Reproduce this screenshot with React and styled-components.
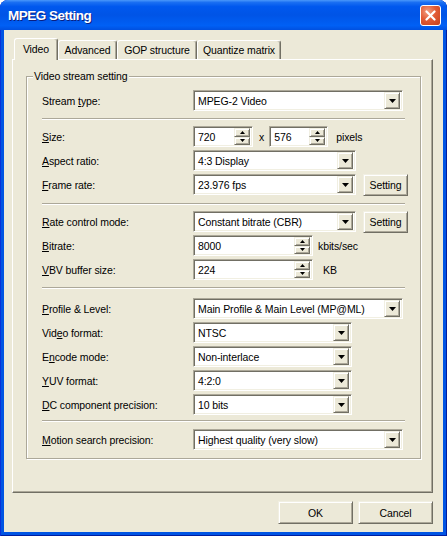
import React from "react";
import styled, { createGlobalStyle, css } from "styled-components";

const GlobalStyle = createGlobalStyle`
  html, body { margin: 0; padding: 0; background: #ffffff; }
  body {
    font-family: "Liberation Sans", Arial, sans-serif;
    font-size: 10.5px;
    letter-spacing: -0.1px;
    color: #000;
  }
  * { box-sizing: border-box; }
`;

const raised = css`
  background: #ece9d8;
  border: 1px solid;
  border-color: #f1efe2 #716f64 #716f64 #f1efe2;
  box-shadow: inset 1px 1px #fff, inset -1px -1px #aca899;
`;

const sunken = css`
  background: #fff;
  border: 1px solid;
  border-color: #aca899 #fff #fff #aca899;
  box-shadow: inset 1px 1px #716f64, inset -1px -1px #f1efe2;
`;

const Window = styled.div`
  width: 447px;
  height: 536px;
  display: flex;
  flex-direction: column;
  background: #0054e3;
  border-radius: 8px 8px 0 0;
  overflow: hidden;
  box-shadow: inset 1px 0 #0831d9, inset -1px 0 #001ea0, inset 0 -1px #001ea0;
`;

const TitleBar = styled.div`
  height: 30px;
  flex-shrink: 0;
  display: flex;
  align-items: center;
  justify-content: space-between;
  padding: 0 6px 0 8px;
  background: linear-gradient(
    180deg,
    #4a98fa 0%,
    #1a6ff2 8%,
    #0058ee 22%,
    #0054e6 50%,
    #0060f5 85%,
    #0050e0 100%
  );
`;

const Title = styled.span`
  color: #fff;
  font-weight: bold;
  font-size: 13.5px;
  letter-spacing: -0.5px;
  text-shadow: 1px 1px 0 #0a1f80;
`;

const CloseBtn = styled.div`
  width: 21px;
  height: 21px;
  border: 1px solid #fff;
  border-radius: 3px;
  background: radial-gradient(circle at 35% 30%, #f29f82 0%, #e25b35 45%, #c7401a 100%);
  display: flex;
  align-items: center;
  justify-content: center;
`;

const Frame = styled.div`
  flex: 1;
  display: flex;
  padding: 0 4px 4px;
`;

const Body = styled.div`
  flex: 1;
  display: flex;
  flex-direction: column;
  background: #ece9d8;
  padding: 8px 10px 8px 8px;
`;

const TabStrip = styled.div`
  display: flex;
  align-items: flex-end;
  height: 21px;
  padding-left: 2px;
`;

const Tab = styled.div`
  width: ${(p) => p.$w}px;
  height: ${(p) => (p.$active ? 22 : 19)}px;
  margin-bottom: ${(p) => (p.$active ? -1 : 0)}px;
  padding-bottom: ${(p) => (p.$active ? 2 : 0)}px;
  position: relative;
  z-index: ${(p) => (p.$active ? 2 : 1)};
  display: flex;
  align-items: center;
  justify-content: center;
  background: #ece9d8;
  border-top: 1px solid #fff;
  border-left: 1px solid #fff;
  border-right: 1px solid #716f64;
  border-radius: 3px 3px 0 0;
  box-shadow: inset -1px 0 #aca899;
  white-space: nowrap;
`;

const Panel = styled.div`
  flex: 1;
  display: flex;
  flex-direction: column;
  border: 1px solid;
  border-color: #fff #716f64 #716f64 #fff;
  box-shadow: inset -1px -1px #aca899;
  padding: 16px 11px 0 13px;
`;

const Group = styled.div`
  position: relative;
  border: 1px solid #aca899;
  box-shadow: inset 1px 1px #fff, 1px 1px #fff;
  padding: 13px 12px 8px 15px;
  display: flex;
  flex-direction: column;
`;

const Legend = styled.span`
  position: absolute;
  top: -7px;
  left: 6px;
  padding: 0 1px;
  line-height: 13px;
  background: #ece9d8;
`;

const Row = styled.div`
  display: flex;
  align-items: center;
  height: 21px;
  margin-top: ${(p) => (p.$mt ?? 3)}px;
`;

const Label = styled.span`
  width: 151px;
  flex-shrink: 0;
  white-space: nowrap;
`;

const Acc = styled.span`
  text-decoration: underline;
`;

const Separator = styled.div`
  height: 2px;
  border-top: 1px solid #aca899;
  border-bottom: 1px solid #fff;
  margin: ${(p) => p.$mt}px 3px 0 0;
`;

const ComboBox = styled.div`
  ${sunken};
  width: ${(p) => p.$w}px;
  height: 21px;
  flex-shrink: 0;
  display: flex;
  align-items: center;
  padding: 2px;
`;

const FieldText = styled.span`
  flex: 1;
  white-space: nowrap;
  overflow: hidden;
  padding-left: 2px;
`;

const DropBtn = styled.div`
  ${raised};
  width: 16px;
  height: 17px;
  flex-shrink: 0;
  display: flex;
  align-items: center;
  justify-content: center;
`;

const SpinCol = styled.div`
  width: 16px;
  height: 17px;
  flex-shrink: 0;
  display: flex;
  flex-direction: column;
`;

const SpinBtn = styled.div`
  ${raised};
  flex: 1;
  display: flex;
  align-items: center;
  justify-content: center;
`;

const Unit = styled.span`
  margin-left: ${(p) => p.$ml}px;
  margin-right: ${(p) => p.$mr ?? 0}px;
  white-space: nowrap;
`;

const PushButton = styled.div`
  ${raised};
  width: ${(p) => p.$w}px;
  height: ${(p) => p.$h}px;
  margin-left: ${(p) => p.$ml ?? 0}px;
  flex-shrink: 0;
  display: flex;
  align-items: center;
  justify-content: center;
`;

const ButtonRow = styled.div`
  display: flex;
  justify-content: flex-end;
  gap: 5px;
  margin-top: 8px;
`;

const DownArrow = () => (
  <svg width="7" height="4" viewBox="0 0 7 4">
    <polygon points="0,0 7,0 3.5,4" fill="#000" />
  </svg>
);

const SmallArrow = ({ up }) => (
  <svg width="5" height="3" viewBox="0 0 5 3">
    <polygon points={up ? "0,3 5,3 2.5,0" : "0,0 5,0 2.5,3"} fill="#000" />
  </svg>
);

const Combo = ({ w, value }) => (
  <ComboBox $w={w}>
    <FieldText>{value}</FieldText>
    <DropBtn>
      <DownArrow />
    </DropBtn>
  </ComboBox>
);

const Spin = ({ w, value }) => (
  <ComboBox $w={w}>
    <FieldText>{value}</FieldText>
    <SpinCol>
      <SpinBtn>
        <SmallArrow up />
      </SpinBtn>
      <SpinBtn>
        <SmallArrow />
      </SpinBtn>
    </SpinCol>
  </ComboBox>
);

export default function App() {
  return (
    <>
      <GlobalStyle />
      <Window>
        <TitleBar>
          <Title>MPEG Setting</Title>
          <CloseBtn>
            <svg width="11" height="11" viewBox="0 0 11 11">
              <path d="M1.5 1.5 L9.5 9.5 M9.5 1.5 L1.5 9.5" stroke="#fff" strokeWidth="2.2" strokeLinecap="round" />
            </svg>
          </CloseBtn>
        </TitleBar>
        <Frame>
          <Body>
            <TabStrip>
              <Tab $active $w={44}>Video</Tab>
              <Tab $w={59}>Advanced</Tab>
              <Tab $w={80}>GOP structure</Tab>
              <Tab $w={84}>Quantize matrix</Tab>
            </TabStrip>
            <Panel>
              <Group>
                <Legend>Video stream setting</Legend>

                <Row $mt={0}>
                  <Label>Stream <Acc>t</Acc>ype:</Label>
                  <Combo w={210} value="MPEG-2 Video" />
                </Row>

                <Separator $mt={7} />

                <Row $mt={6}>
                  <Label><Acc>S</Acc>ize:</Label>
                  <Spin w={60} value="720" />
                  <Unit $ml={6} $mr={5}>x</Unit>
                  <Spin w={59} value="576" />
                  <Unit $ml={8}>pixels</Unit>
                </Row>
                <Row>
                  <Label><Acc>A</Acc>spect ratio:</Label>
                  <Combo w={163} value="4:3 Display" />
                </Row>
                <Row>
                  <Label><Acc>F</Acc>rame rate:</Label>
                  <Combo w={163} value="23.976 fps" />
                  <PushButton $w={45} $h={22} $ml={7}>Setting</PushButton>
                </Row>

                <Separator $mt={8} />

                <Row $mt={6}>
                  <Label><Acc>R</Acc>ate control mode:</Label>
                  <Combo w={163} value="Constant bitrate (CBR)" />
                  <PushButton $w={45} $h={22} $ml={7}>Setting</PushButton>
                </Row>
                <Row>
                  <Label><Acc>B</Acc>itrate:</Label>
                  <Spin w={120} value="8000" />
                  <Unit $ml={5}>kbits/sec</Unit>
                </Row>
                <Row>
                  <Label><Acc>V</Acc>BV buffer size:</Label>
                  <Spin w={120} value="224" />
                  <Unit $ml={10}>KB</Unit>
                </Row>

                <Separator $mt={7} />

                <Row $mt={9}>
                  <Label><Acc>P</Acc>rofile &amp; Level:</Label>
                  <Combo w={210} value="Main Profile & Main Level (MP@ML)" />
                </Row>
                <Row>
                  <Label>Vid<Acc>e</Acc>o format:</Label>
                  <Combo w={159} value="NTSC" />
                </Row>
                <Row>
                  <Label>E<Acc>n</Acc>code mode:</Label>
                  <Combo w={159} value="Non-interlace" />
                </Row>
                <Row>
                  <Label><Acc>Y</Acc>UV format:</Label>
                  <Combo w={159} value="4:2:0" />
                </Row>
                <Row>
                  <Label><Acc>D</Acc>C component precision:</Label>
                  <Combo w={159} value="10 bits" />
                </Row>

                <Separator $mt={5} />

                <Row $mt={7}>
                  <Label><Acc>M</Acc>otion search precision:</Label>
                  <Combo w={210} value="Highest quality (very slow)" />
                </Row>
              </Group>
            </Panel>
            <ButtonRow>
              <PushButton $w={75} $h={23}>OK</PushButton>
              <PushButton $w={75} $h={23}>Cancel</PushButton>
            </ButtonRow>
          </Body>
        </Frame>
      </Window>
    </>
  );
}
